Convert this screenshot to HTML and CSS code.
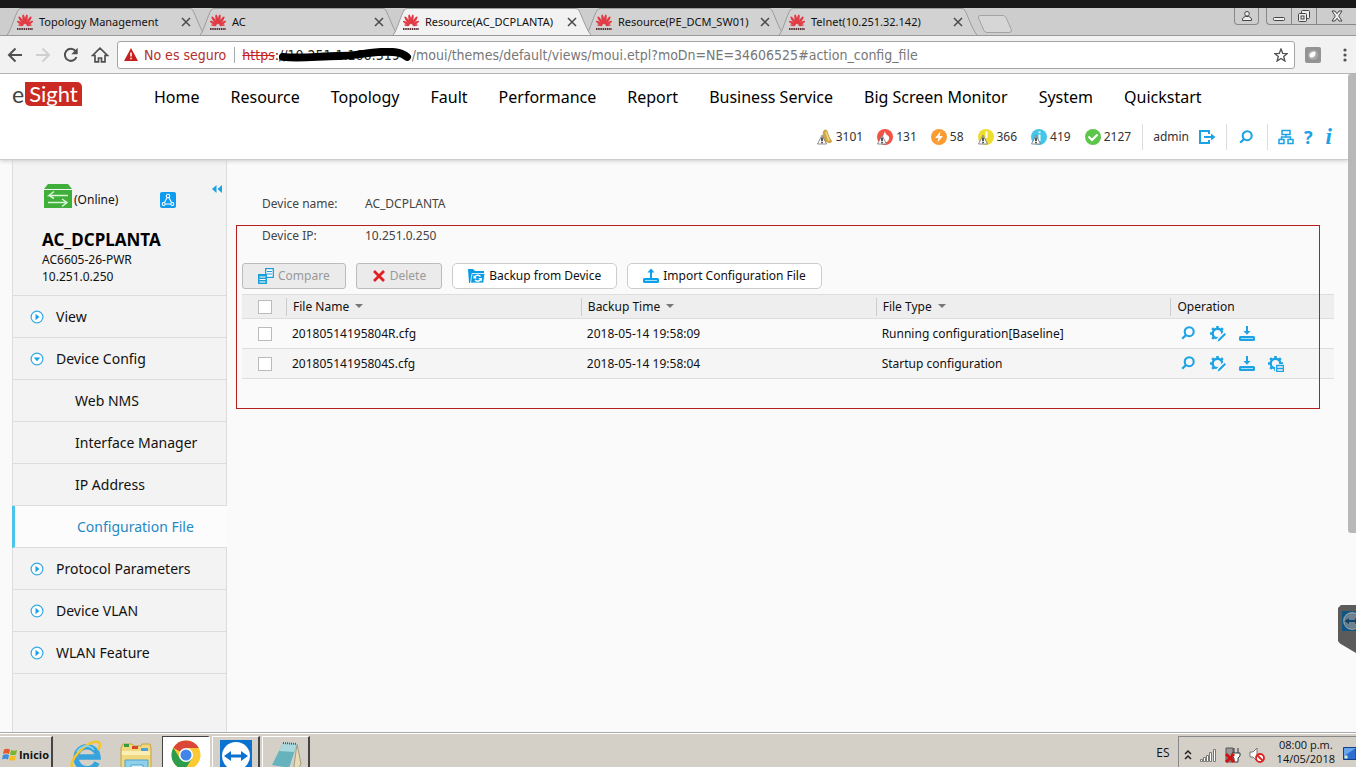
FILE: index.html
```html
<!DOCTYPE html>
<html lang="en">
<head>
<meta charset="utf-8">
<title>Resource(AC_DCPLANTA)</title>
<link rel="stylesheet" href="styles.css">
</head>
<body>
<svg class="defs" aria-hidden="true">
  <symbol id="huawei" viewBox="0 0 16 17">
    <g fill="#e23b45">
      <ellipse cx="6.8" cy="5.2" rx="1.3" ry="4.8" transform="rotate(-9 6.8 5.2)"/>
      <ellipse cx="9.2" cy="5.2" rx="1.3" ry="4.8" transform="rotate(9 9.2 5.2)"/>
      <ellipse cx="4.4" cy="6.6" rx="1.3" ry="4.8" transform="rotate(-34 4.4 6.6)"/>
      <ellipse cx="11.6" cy="6.6" rx="1.3" ry="4.8" transform="rotate(34 11.6 6.6)"/>
      <ellipse cx="3.2" cy="9" rx="1.2" ry="3.8" transform="rotate(-58 3.2 9)"/>
      <ellipse cx="12.8" cy="9" rx="1.2" ry="3.8" transform="rotate(58 12.8 9)"/>
      <ellipse cx="3.8" cy="11.2" rx="2.6" ry=".9" transform="rotate(6 3.8 11.2)"/>
      <ellipse cx="12.2" cy="11.2" rx="2.6" ry=".9" transform="rotate(-6 12.2 11.2)"/>
    </g>
    <path d="M0 15h16" stroke="#5a3035" stroke-width="2" stroke-dasharray="1.5 .7"/>
  </symbol>
  <symbol id="tabshape" viewBox="0 0 206 29">
    <path d="M.5 28C4 25 9 6 12 2.500Q13 .5 15 .5H190Q192 .5 193 2.500C196 8 201 23 205.500 28" stroke="#999"/>
  </symbol>
  <symbol id="close" viewBox="0 0 10 10"><path d="M1 1l8 8M9 1l-8 8" stroke="#4a4a4a" stroke-width="1.500"/></symbol>
  <symbol id="warn" viewBox="0 0 12 12"><path d="M6 .8L11.400 11.400H.6z" fill="#fff" stroke="#777"/><path d="M6 3.500V8M6 9v1.500" stroke="#222" stroke-width="1.800"/></symbol>
  <symbol id="search" viewBox="0 0 14 14"><circle cx="8.200" cy="5.700" r="4.500" fill="none" stroke="#1ca3e6" stroke-width="2.100"/><path d="M5 9L1.200 12.800" stroke="#1ca3e6" stroke-width="2.300"/></symbol>
  <symbol id="gear" viewBox="0 0 16 16">
    <circle cx="7.500" cy="7.500" r="4.800" fill="none" stroke="#1ca3e6" stroke-width="2.400"/>
    <path d="M7.500 0v3M7.500 12v3M2.200 2.200l2 2M0 7.500h3M2.200 12.800l2-2M12.800 2.200l-2 2M12 7.500h3M12.800 12.800l-2-2" stroke="#1ca3e6" stroke-width="2.600"/>
  </symbol>
  <symbol id="gearedit" viewBox="0 0 16 16">
    <use href="#gear"/><path d="M7 16.500L16 7.500" stroke="#fafafa" stroke-width="6"/><path d="M7.500 15.800l1-2.800 6-6 1.500 1.500-6 6z" fill="#1ca3e6"/>
  </symbol>
  <symbol id="gearlist" viewBox="0 0 16 16">
    <use href="#gear"/><path d="M7 8h9v8H7z" fill="#f6f6f6"/><path d="M8.700 9.500h6.700v5.900H8.700zM8.700 12.500h6.700" fill="none" stroke="#1ca3e6" stroke-width="1.300"/>
  </symbol>
  <symbol id="download" viewBox="0 0 16 16"><path d="M8 0v7" stroke="#1ca3e6" stroke-width="2"/><path d="M4.500 5h7L8 8.800z" fill="#1ca3e6"/><rect x="1" y="11" width="14" height="3" rx=".5" fill="#a8dcf4" stroke="#1ca3e6" stroke-width="2"/></symbol>
  <symbol id="upload" viewBox="0 0 16 16"><path d="M8 3v7" stroke="#0aa0ea" stroke-width="2"/><path d="M4.500 4.500h7L8 .5z" fill="#0aa0ea"/><rect x="1" y="11" width="14" height="3" rx=".5" fill="#a8dcf4" stroke="#0aa0ea" stroke-width="2"/></symbol>
  <symbol id="expand" viewBox="0 0 14 14"><circle cx="7" cy="7" r="5.900" fill="#fff" stroke="#35a9e6" stroke-width="1.200"/><path d="M5.500 3.800L9.500 7l-4 3.200z" fill="#1ca3e6"/></symbol>
  <symbol id="collapse" viewBox="0 0 14 14"><circle cx="7" cy="7" r="5.900" fill="#fff" stroke="#35a9e6" stroke-width="1.200"/><path d="M3.700 5.500h6.600L7 9.300z" fill="#1ca3e6"/></symbol>
  <symbol id="teamviewer" viewBox="0 0 32 32"><rect width="32" height="32" fill="#0b72cf"/><circle cx="16" cy="16" r="14" fill="#fff"/><path d="M4 16l7-5v3.500h10V11l7 5-7 5v-3.500H11V21z" fill="#0b72cf"/></symbol>
  <symbol id="teamviewer-dim" viewBox="0 0 32 32"><rect width="32" height="32" fill="#0f5685"/><circle cx="16" cy="16" r="13" fill="none" stroke="#8f9ba3" stroke-width="2.500"/><circle cx="16" cy="16" r="11.500" fill="#6d8190"/><path d="M4 16l7-5v3.500h10V11l7 5-7 5v-3.500H11V21z" fill="#0f4568"/></symbol>
</svg>

<div class="topbar"></div>
<div class="tabstrip">
  <ul class="tabs">
    <li class="tab"><svg class="tab-bg"><use href="#tabshape"/></svg><svg class="tab-logo"><use href="#huawei"/></svg><span class="tab-title">Topology Management</span><button class="tab-close" aria-label="Close tab"><svg><use href="#close"/></svg></button></li>
    <li class="tab"><svg class="tab-bg"><use href="#tabshape"/></svg><svg class="tab-logo"><use href="#huawei"/></svg><span class="tab-title">AC</span><button class="tab-close" aria-label="Close tab"><svg><use href="#close"/></svg></button></li>
    <li class="tab active"><svg class="tab-bg"><use href="#tabshape"/></svg><svg class="tab-logo"><use href="#huawei"/></svg><span class="tab-title">Resource(AC_DCPLANTA)</span><button class="tab-close" aria-label="Close tab"><svg><use href="#close"/></svg></button></li>
    <li class="tab"><svg class="tab-bg"><use href="#tabshape"/></svg><svg class="tab-logo"><use href="#huawei"/></svg><span class="tab-title">Resource(PE_DCM_SW01)</span><button class="tab-close" aria-label="Close tab"><svg><use href="#close"/></svg></button></li>
    <li class="tab"><svg class="tab-bg"><use href="#tabshape"/></svg><svg class="tab-logo"><use href="#huawei"/></svg><span class="tab-title">Telnet(10.251.32.142)</span><button class="tab-close" aria-label="Close tab"><svg><use href="#close"/></svg></button></li>
  </ul>
  <button class="newtab" aria-label="New tab"><svg width="36" height="18" viewBox="0 0 36 18"><path d="M3 .5H26Q28 .5 29 2.500L34.500 15Q35 17.500 32 17.500H10Q8 17.500 7 15.500L1.500 3Q1 .5 3 .5z" fill="#d6d6d6" stroke="#a3a3a3"/></svg></button>
  <div class="winbtns">
    <button class="win user" aria-label="User"><svg width="12" height="12" viewBox="0 0 12 12" fill="#eee" stroke="#444"><circle cx="6" cy="3.800" r="2.300"/><path d="M1.500 10.500V9Q2 7 4.500 6.500h3Q10 7 10.500 9v1.500z"/></svg></button>
    <div class="wingroup">
      <button class="win" aria-label="Minimize"><svg width="12" height="12" viewBox="0 0 12 12"><rect x=".5" y="7.500" width="11" height="3" rx="1" fill="#eee" stroke="#444"/></svg></button>
      <button class="win" aria-label="Restore"><svg width="14" height="14" viewBox="0 0 14 14" fill="#eee" stroke="#444"><rect x="4.500" y="1.500" width="8" height="8" rx="1"/><rect x="1.500" y="4.500" width="8" height="8" rx="1"/><rect x="4" y="7" width="3" height="3"/></svg></button>
      <button class="win last" aria-label="Close"><svg width="12" height="12" viewBox="0 0 12 12"><path d="M1 1h3l2 2.700L8 1h3L7.700 6 11 11H8L6 8.300 4 11H1l3.300-5z" fill="#eee" stroke="#444"/></svg></button>
    </div>
  </div>
</div>

<div class="toolbar">
  <div class="navbtns">
    <button aria-label="Back"><svg width="16" height="16" viewBox="0 0 16 16" fill="none" stroke="#505050" stroke-width="2"><path d="M15 8H2M8.500 1.500L2 8l6.500 6.500"/></svg></button>
    <button aria-label="Forward"><svg width="16" height="16" viewBox="0 0 16 16" fill="none" stroke="#cfcfcf" stroke-width="2"><path d="M1 8h13M7.500 1.500L14 8l-6.500 6.500"/></svg></button>
    <button aria-label="Reload"><svg width="16" height="16" viewBox="0 0 16 16"><path d="M13.500 10A6 6 0 1 1 12.500 4" fill="none" stroke="#505050" stroke-width="2"/><path d="M14.700 .8v6.400H8.300z" fill="#505050"/></svg></button>
    <button aria-label="Home"><svg width="18" height="16" viewBox="0 0 18 16" fill="none" stroke="#505050" stroke-width="1.700"><path d="M1.500 8.500L9 1.200l7.500 7.300H14v6.300h-3.500V11h-3v3.800H4V8.500z"/></svg></button>
  </div>
  <div class="address">
    <svg width="14" height="13" viewBox="0 0 14 13"><path d="M7 0l7 13H0z" fill="#c5221f"/><path d="M7 4.500V8.500M7 9.700v1.600" stroke="#fff" stroke-width="1.500"/></svg>
    <span class="insecure">No es seguro</span>
    <span class="scheme">https</span>
    <span class="host">://10.251.1.166:319<svg class="scribble" viewBox="0 0 140 14"><path d="M8 9C28 11 45 8 65 8S88 5 105 4s24 0 30 5" fill="none" stroke="#000" stroke-width="8" stroke-linecap="round"/></svg></span>
    <input class="url" type="text" aria-label="Address" value="/moui/themes/default/views/moui.etpl?moDn=NE=34606525#action_config_file">
    <button class="star" aria-label="Bookmark"><svg width="14" height="14" viewBox="0 0 14 14"><path d="M7 1l1.700 4.300 4.500.3-3.500 2.900 1.200 4.500L7 10.500 3.100 13l1.200-4.500L.8 5.600l4.500-.3z" fill="none" stroke="#505050" stroke-width="1.300"/></svg></button>
  </div>
  <button class="ext" aria-label="Extension"><svg width="16" height="16" viewBox="0 0 16 16"><rect width="16" height="16" rx="2" fill="#939393"/><circle cx="8" cy="8" r="5" fill="#aaa"/><path d="M4.500 8Q5 4.500 10.500 4.500 11 10 7 10.700q-2.500 0-2.500-2.700z" fill="#fff"/></svg></button>
  <button class="menu" aria-label="Menu"><svg width="4" height="14" viewBox="0 0 4 14" fill="#505050"><circle cx="2" cy="2" r="1.600"/><circle cx="2" cy="7" r="1.600"/><circle cx="2" cy="12" r="1.600"/></svg></button>
</div>

<div class="viewport">
  <header class="header">
    <div class="mainrow">
      <a class="logo" href="#"><span class="logo-e">e</span><span class="logo-s">Sight</span></a>
      <nav class="mainnav">
        <a href="#">Home</a><a href="#">Resource</a><a href="#">Topology</a><a href="#">Fault</a><a href="#">Performance</a><a href="#">Report</a><a href="#">Business Service</a><a href="#">Big Screen Monitor</a><a href="#">System</a><a href="#">Quickstart</a>
      </nav>
    </div>
    <div class="status">
      <div class="alarms">
        <a href="#"><svg width="16" height="16" viewBox="0 0 16 16"><path d="M6 2.500Q8-1 10.500 2L13 9l2 3q0 2-3 2L5 12z" fill="#cfa545"/><path d="M9 3l3 9" stroke="#f0d890" stroke-width="1.500"/><use href="#warn" y="5" width="10" height="11"/></svg>3101</a>
        <a href="#"><svg width="16" height="16" viewBox="0 0 16 16"><circle cx="8" cy="8" r="8" fill="#f25346"/><path d="M8 2q0 3 3.500 5 2 3-1.500 6H6Q3 10 6 7z" fill="#fff"/><use href="#warn" y="5" width="10" height="11"/></svg>131</a>
        <a href="#"><svg width="16" height="16" viewBox="0 0 16 16"><circle cx="8" cy="8" r="8" fill="#fb9c33"/><path d="M9.500 2.500L4 9h3.500l-1 4.500L12 7H8.500z" fill="#fff"/></svg>58</a>
        <a href="#"><svg width="16" height="16" viewBox="0 0 16 16"><circle cx="8" cy="8" r="8" fill="#eedc2e"/><path d="M8.500 2.500V9" stroke="#fff" stroke-width="2"/><use href="#warn" y="5" width="10" height="11"/></svg>366</a>
        <a href="#"><svg width="16" height="16" viewBox="0 0 16 16"><circle cx="8" cy="8" r="8" fill="#42c6ea"/><path d="M8.500 2.500V4M8.500 5.500V12" stroke="#fff" stroke-width="2"/><use href="#warn" y="5" width="10" height="11"/></svg>419</a>
        <a href="#"><svg width="16" height="16" viewBox="0 0 16 16"><circle cx="8" cy="8" r="8" fill="#5bc64a"/><path d="M3.500 7.500L7 11l5.500-5.500" fill="none" stroke="#fff" stroke-width="2.200"/></svg>2127</a>
      </div>
      <div class="tools">admin<button aria-label="Log out"><svg width="17" height="16" viewBox="0 0 17 16" fill="none" stroke="#1ca3e6" stroke-width="2"><path d="M10 5V2H1v12h9v-3M5 8h8"/><path d="M12 4.500L16.500 8 12 11.500z" fill="#1ca3e6" stroke="none"/></svg></button></div>
      <div class="tools find"><button aria-label="Search"><svg width="14" height="14"><use href="#search"/></svg></button></div>
      <div class="tools help">
        <button aria-label="Site map"><svg width="16" height="16" viewBox="0 0 16 16" fill="none" stroke="#1ca3e6" stroke-width="1.500"><path d="M4 1.500h8v4H4zM1 10.500h5v4H1zM10 10.500h5v4h-5zM8 5.500V8M3.500 10.500V8h9v2.500"/></svg></button>
        <button class="glyph" aria-label="Help">?</button>
        <button class="glyph info" aria-label="About">i</button>
      </div>
    </div>
  </header>

  <div class="body">
    <aside class="sidebar">
      <div class="device">
        <div class="device-state">
          <svg width="28" height="24" viewBox="0 0 28 24"><path d="M4 0h20l4 5H0z" fill="#3fae3a"/><path d="M0 6h28v18H0z" fill="#3fae3a"/><path d="M10 7.500L5 11.500h19M5 11.500l5 3M4 18.500h19M18 15l5 3.500-5 4" fill="none" stroke="#d8f5d5" stroke-width="1.500"/></svg>
          <span>(Online)</span>
          <button class="topo" aria-label="Show in topology"><svg width="16" height="16" viewBox="0 0 16 16"><rect width="16" height="16" rx="2" fill="#0f9bf0"/><g fill="none" stroke="#fff" stroke-width="1.100"><circle cx="8" cy="4" r="1.700"/><circle cx="3.700" cy="12" r="1.500"/><circle cx="12.300" cy="12" r="1.500"/><path d="M7.200 5.600L4.400 10.600M8.800 5.600l2.800 5M5.200 12h5.600"/></g></svg></button>
          <button class="fold" aria-label="Collapse sidebar"><svg width="10" height="8" viewBox="0 0 10 8" fill="#1ca3e6"><path d="M4.500 0v8L0 4zM10 0v8L5.500 4z"/></svg></button>
        </div>
        <h1>AC_DCPLANTA</h1>
        <p>AC6605-26-PWR</p>
        <p>10.251.0.250</p>
      </div>
      <nav class="sidenav">
        <a href="#"><svg><use href="#expand"/></svg>View</a>
        <a href="#"><svg><use href="#collapse"/></svg>Device Config</a>
        <a class="sub" href="#">Web NMS</a>
        <a class="sub" href="#">Interface Manager</a>
        <a class="sub" href="#">IP Address</a>
        <a class="sub current" href="#">Configuration File</a>
        <a href="#"><svg><use href="#expand"/></svg>Protocol Parameters</a>
        <a href="#"><svg><use href="#expand"/></svg>Device VLAN</a>
        <a href="#"><svg><use href="#expand"/></svg>WLAN Feature</a>
      </nav>
    </aside>
    <main class="content">
      <dl class="info-list">
        <dt>Device name:</dt><dd>AC_DCPLANTA</dd>
        <dt>Device IP:</dt><dd>10.251.0.250</dd>
      </dl>
      <div class="actions">
        <button class="btn" disabled><svg width="16" height="16" viewBox="0 0 16 16"><path d="M7.700.7h7.600v8.600H7.700z" fill="#fff" stroke="#1c9fd8" stroke-width="1.300"/><path d="M9 3.500h5M9 6h5" stroke="#1c9fd8"/><path d="M0 6h9v10H0z" fill="#1c9fd8"/><path d="M1.500 9h6M1.500 11.500h6M1.500 14h6" stroke="#fff"/></svg>Compare</button>
        <button class="btn" disabled><svg width="14" height="16" viewBox="0 0 14 16"><path d="M2 3l10 10M12 3L2 13" stroke="#e02020" stroke-width="2.800"/></svg>Delete</button>
        <button class="btn"><svg width="17" height="16" viewBox="0 0 17 16"><path d="M0 1h5l2 2h9v12H1z" fill="#0a9be6"/><path d="M2.500 15L4 5.500h13L15.500 15z" fill="#0a9be6" stroke="#fff" stroke-width=".8"/><path d="M6.500 9.500a3.500 3.500 0 0 1 6-1M13 10.500a3.500 3.500 0 0 1-6 1.500" fill="none" stroke="#fff" stroke-width="1.500"/><path d="M5.500 7v3.500H9zM13.800 13.500V10h-3.500z" fill="#fff"/></svg>Backup from Device</button>
        <button class="btn"><svg width="16" height="16"><use href="#upload"/></svg>Import Configuration File</button>
      </div>
      <table class="files">
        <thead>
          <tr><th class="pick"><input type="checkbox" aria-label="Select all"></th><th class="sort"><span>File Name</span></th><th class="sort"><span>Backup Time</span></th><th class="sort"><span>File Type</span></th><th class="ops-col"><span>Operation</span></th></tr>
        </thead>
        <tbody>
          <tr><td class="pick"><input type="checkbox" aria-label="Select 20180514195804R.cfg"></td><td>20180514195804R.cfg</td><td>2018-05-14 19:58:09</td><td>Running configuration[Baseline]</td>
            <td><div class="ops"><button aria-label="View"><svg><use href="#search" width="14" height="14"/></svg></button><button aria-label="Edit"><svg><use href="#gearedit"/></svg></button><button aria-label="Download"><svg><use href="#download"/></svg></button></div></td></tr>
          <tr><td class="pick"><input type="checkbox" aria-label="Select 20180514195804S.cfg"></td><td>20180514195804S.cfg</td><td>2018-05-14 19:58:04</td><td>Startup configuration</td>
            <td><div class="ops"><button aria-label="View"><svg><use href="#search" width="14" height="14"/></svg></button><button aria-label="Edit"><svg><use href="#gearedit"/></svg></button><button aria-label="Download"><svg><use href="#download"/></svg></button><button aria-label="Set baseline"><svg><use href="#gearlist"/></svg></button></div></td></tr>
        </tbody>
      </table>
      <div class="marker"></div>
    </main>
  </div>
  <div class="scroll-thumb"></div>
  <div class="tv-handle"><svg><use href="#teamviewer-dim"/></svg></div>
</div>

<footer class="taskbar">
  <button class="start"><svg width="16" height="16" viewBox="0 0 16 16"><path d="M2 2.500Q5 .8 8 2.500L7 7Q4 5.500 1 7z" fill="#e8582a"/><path d="M9 3q3 1.500 6 0l-1 4.500q-3 1.500-6 0z" fill="#76b82a"/><path d="M1 8q3-1.500 6 0l-1 4.500Q3 11 0 12.500z" fill="#3a8ee0"/><path d="M8 8.500q3 1.500 6 0L13 13q-3 1.500-6 0z" fill="#f7bd1d"/></svg>Inicio</button>
  <div class="apps">
    <button class="app flat" aria-label="Internet Explorer"><svg width="32" height="32" viewBox="0 0 32 32"><path d="M27 22.500A11 11 0 1 1 28 17H9" fill="none" stroke="#36a3dc" stroke-width="5.500"/><path d="M3 28C-4 22 18-1 28 2q4 2 0 8" fill="none" stroke="#f4c530" stroke-width="2.600"/><path d="M7 12A10 10 0 0 1 24 10" fill="none" stroke="#8bd4f4" stroke-width="1.500"/></svg></button>
    <button class="app flat" aria-label="Explorer"><svg width="32" height="32" viewBox="0 0 32 32"><path d="M1 8l2-4h9l2 2h7l1-2h8l1 4v24H1z" fill="#f1d77d" stroke="#c7a33f"/><path d="M4 4h5v3H4z" fill="#3a9b3c"/><path d="M12 6h6v3h-6z" fill="#d6472c"/><path d="M21 8h7v3h-7z" fill="#4d9fe0"/><path d="M2 11h28v4H2z" fill="#faeeb5"/><path d="M5 20h23v12H5z" fill="#8ed0ec" stroke="#4ba5cd"/><path d="M11 25h12v7H11z" fill="#dff3fb" stroke="#4ba5cd"/></svg></button>
    <button class="app pressed" aria-label="Chrome"><svg width="30" height="30" viewBox="0 0 30 30"><circle cx="15" cy="15" r="14.500" fill="#fcc934"/><path d="M15 15L2.400 7.800A14.500 14.500 0 0 1 27.800 8H15z" fill="#dc4636"/><path d="M2.400 7.800A14.500 14.500 0 0 0 14 29.500L21 18.500 15 15 9 18.500z" fill="#2e9d4b"/><circle cx="15" cy="15" r="7" fill="#fff"/><circle cx="15" cy="15" r="5.500" fill="#4285e8"/></svg></button>
    <button class="app" aria-label="TeamViewer"><svg width="32" height="32"><use href="#teamviewer"/></svg></button>
    <button class="app" aria-label="Notepad"><svg width="32" height="32" viewBox="0 0 32 32"><path d="M27 4l4 20-4 6-3-4z" fill="#e8ddb8" stroke="#8b8262" stroke-width=".7"/><path d="M13 3l14 1-8 24-17-3z" fill="#66b3bd"/><path d="M13 3l14 1-3 8-15-1z" fill="#a9d9dd"/><path d="M13 3l14 1" stroke="#556" stroke-width="2" stroke-dasharray="1 1"/></svg></button>
  </div>
  <span class="lang">ES</span>
  <div class="tray">
    <button aria-label="Show hidden icons"><svg width="8" height="12" viewBox="0 0 8 12" fill="none" stroke="#222" stroke-width="1.500"><path d="M1 5l3-3 3 3M1 10l3-3 3 3"/></svg></button>
    <svg width="17" height="14" viewBox="0 0 17 14" fill="#fff" stroke="#777"><path d="M.5 11.500h2v2h-2zM3.500 9.500h2v4h-2zM6.500 7.500h2v6h-2zM9.500 4.500h2v9h-2zM13.500 1.500h2v12h-2z"/></svg>
    <svg width="16" height="16" viewBox="0 0 16 16"><path d="M1 1h7v14H1z" fill="#999" stroke="#555"/><path d="M7 6h8v3l-2 2v4h-4v-4L7 9z" fill="#fff" stroke="#333"/><path d="M9 1v5M13 1v5" stroke="#333"/><path d="M1 7l8 8M9 7l-8 8" stroke="#d41111" stroke-width="3"/></svg>
    <svg width="16" height="16" viewBox="0 0 16 16"><path d="M1 5h3l4-4v13l-4-4H1z" fill="#fff" stroke="#777"/><circle cx="11" cy="11" r="4" fill="#fff" stroke="#dd2222" stroke-width="1.800"/><path d="M8 8l6 6" stroke="#dd2222" stroke-width="1.800"/></svg>
    <div class="clock"><span>08:00 p.m.</span><span>14/05/2018</span></div>
    <svg class="desk" width="13" height="13" viewBox="0 0 13 13"><path d="M.5.500H13v12H.5z" fill="#2c6fd0" stroke="#123f8a"/><path d="M1 1h12L1 9z" fill="#69a6ee"/><circle cx="3" cy="10" r="1.800" fill="#d9e8c0"/></svg>
  </div>
</footer>
</body>
</html>
```

FILE: styles.css
```css
* { box-sizing: border-box; }
body {
  margin: 0;
  height: 100vh;
  display: flex;
  flex-direction: column;
  overflow: hidden;
  font: 12px/18px "Noto Sans", sans-serif;
  color: #111;
  background: #fafafa;
}
button { border: 0; padding: 0; margin: 0; background: none; font: inherit; color: inherit; display: flex; align-items: center; justify-content: center; }
a { color: inherit; text-decoration: none; }
svg { flex: none; display: block; }
h1, p, dl, dd, ul { margin: 0; padding: 0; }
.defs { position: absolute; width: 0; height: 0; }

/* Browser frame */
.topbar { flex: none; height: 8px; background: #191919; }
.tabstrip { flex: none; height: 28px; display: flex; background: #cdcdcd; border-bottom: 1px solid #999; }
.tabs { display: flex; list-style: none; padding-left: 3px; }
.tab { position: relative; isolation: isolate; width: 193px; height: 28px; display: flex; align-items: center; padding: 0 5px 0 14px; font: 11px/16px "Noto Sans", sans-serif; }
.tab-bg { position: absolute; z-index: -1; left: 0; top: 0; width: 206px; height: 28px; fill: #d2d2d2; }
.tab.active { z-index: 1; }
.tab.active .tab-bg { fill: #f2f2f2; }
.tab-logo { width: 16px; height: 17px; margin-right: 6px; }
.tab-title { flex: 1; white-space: nowrap; }
.tab-close { width: 10px; height: 10px; }
.tab-close svg { width: 10px; height: 10px; }
.newtab { margin: 7px 0 0 9px; height: 18px; }
.winbtns { margin-left: auto; display: flex; gap: 7px; height: 17px; }
.wingroup { display: flex; border: 1px solid #888; border-top: 0; border-right: 0; border-radius: 0 0 0 4px; }
.win { width: 25px; height: 16px; border-right: 1px solid #888; }
.win.user { height: 17px; border: 1px solid #888; border-top: 0; border-radius: 0 0 4px 4px; }
.win.last { width: 39px; border-right: 0; }
.toolbar { flex: none; height: 38px; display: flex; align-items: center; background: #f2f2f2; border-bottom: 1px solid #b4b4b4; padding: 0 9px 0 7px; }
.navbtns { display: flex; gap: 12px; width: 110px; flex: none; }
.address { flex: 1; min-width: 0; height: 28px; display: flex; align-items: center; background: #fff; border: 1px solid #a5a5a5; border-radius: 3px; padding: 0 6px; font: 14px/20px "DejaVu Sans Condensed", "DejaVu Sans", sans-serif; white-space: nowrap; }
.insecure { color: #b3302c; margin-left: 6px; padding-right: 8px; border-right: 1px solid #aaa; line-height: 16px; }
.scheme { color: #c5221f; text-decoration: line-through; margin-left: 7px; }
.host { position: relative; min-width: 137px; color: #222; }
.scribble { position: absolute; left: 0; top: 3px; width: 137px; height: 14px; }
.url { flex: 1; min-width: 0; border: 0; padding: 0; outline: 0; background: none; font: inherit; color: #777; }
.ext { margin: 0 22px 0 10px; }

/* Page */
.viewport { position: relative; flex: 1; min-height: 0; display: flex; flex-direction: column; overflow: hidden; padding-right: 8px; }
.header { flex: none; height: 86px; background: #fff; border-bottom: 1px solid #ccc; box-shadow: 0 1px 4px #ccc; z-index: 1; }
.mainrow { display: flex; height: 46px; padding-left: 12px; }
.logo { width: 142px; display: flex; padding-top: 8px; }
.logo-e { font: 23px/24px Lato, sans-serif; color: #444; margin-right: 1px; }
.logo-s { height: 24px; padding: 0 4px; background: #cb2a22; color: #fff; border-radius: 0 5px 0 5px; font: 22px/23px Lato, sans-serif; }
.mainnav { display: flex; gap: 31px; font-size: 16px; line-height: 46px; white-space: nowrap; color: #000; }
.status { display: flex; justify-content: flex-end; align-items: center; height: 34px; padding-right: 16px; color: #333; }
.alarms { display: flex; gap: 14px; padding-right: 11px; }
.alarms a { display: flex; align-items: center; gap: 3px; }
.tools { display: flex; align-items: center; gap: 10px; height: 26px; padding: 0 10px; border-left: 1px solid #ddd; }
.tools.find { padding: 0 14px 0 12px; }
.tools.help { padding-right: 0; }
.glyph { font: bold 18px/20px "Noto Sans", sans-serif; color: #1ca3e6; }
.glyph.info { padding-left: 3px; font: italic bold 23px/20px "Liberation Serif", serif; }
.body { flex: 1; min-height: 0; display: flex; padding-left: 12px; background: #fafafa; }
.sidebar { width: 215px; flex: none; background: #f3f3f3; border: solid #ddd; border-width: 0 1px; }
.device { height: 136px; padding: 23px 4px 0 29px; border-bottom: 1px solid #ddd; }
.device-state { display: flex; align-items: center; height: 28px; }
.device-state > svg { margin: 0 0 2px 2px; }
.device-state span { margin: 6px 0 0 2px; flex: 1; }
.device-state .topo { margin: 6px 36px 0 0; }
.fold { align-self: flex-start; margin-top: 2px; }
.device h1 { font-size: 17px; line-height: 22px; margin-top: 18px; color: #000; }
.device p { line-height: 17px; }
.sidenav { font-size: 14px; color: #111; }
.sidenav a { display: flex; align-items: center; height: 42px; padding-left: 17px; border-bottom: 1px solid #ddd; }
.sidenav svg { width: 14px; height: 14px; margin-right: 12px; }
.sidenav .sub { padding-left: 62px; }
.sidenav .current { margin: 0 -1px; border-left: 3px solid #4bc3ea; background: #fcfcfc; color: #2489c5; }
.content { position: relative; flex: 1; min-width: 0; padding: 35px 14px 0 15px; }
.info-list { display: grid; grid-template-columns: 103px 1fr; row-gap: 14px; padding-left: 20px; color: #444; }
.actions { display: flex; gap: 10px; margin-top: 18px; }
.btn { height: 26px; gap: 4px; padding: 0 15px; border: 1px solid #ccc; border-radius: 5px; background: #fff; white-space: nowrap; color: #111; }
.btn:disabled { background: #ebebeb; border-color: #bbb; border-radius: 3px; color: #999; }
.files { width: 100%; margin-top: 5px; border-collapse: collapse; table-layout: fixed; border-top: 1px solid #ddd; }
.files th { height: 24px; padding: 0; text-align: left; font-weight: normal; background: #eee; }
.files th span { display: block; border-left: 1px solid #ccc; padding-left: 6px; }
.files .sort { width: 27%; }
.files .sort span::after { content: ""; display: inline-block; margin-left: 6px; vertical-align: 3px; border: 4px solid transparent; border-top-color: #777; border-bottom: 0; }
.files td { height: 30px; padding: 0 0 0 6px; }
.files tr { border-bottom: 1px solid #ddd; }
.files tbody tr:nth-child(2) { background: #f5f5f5; }
.files .pick { width: 44px; padding: 0 0 0 16px; }
.files input { appearance: none; display: block; margin: 0; width: 14px; height: 14px; border: 1px solid #bbb; background: #fff; }
.ops { display: flex; gap: 13px; padding-left: 5px; }
.ops svg { width: 16px; height: 16px; }
.marker { position: absolute; left: 9px; right: 28px; top: 65px; height: 184px; border: 1px solid #b81d1d; pointer-events: none; }
.scroll-thumb { position: absolute; z-index: 2; right: 0; top: 0; width: 8px; height: 459px; background: #b8b8b8; border-radius: 3px 0 0 3px; }
.tv-handle { position: absolute; right: 0; top: 531px; width: 18px; height: 48px; padding: 6px 0 0 4px; overflow: hidden; background: #5b5b5b; clip-path: polygon(0 3px, 3px 0, 100% 0, 100% 100%, 2px 80%, 0 75%); }
.tv-handle svg { width: 20px; height: 20px; }

/* Taskbar */
.taskbar { flex: none; height: 35px; display: flex; align-items: flex-start; overflow: hidden; background: #d4d0c8; border-top: 1px solid #aaa; box-shadow: inset 0 1px #fff; font: 11px/14px "Open Sans", sans-serif; color: #111; }
.start { width: 53px; height: 40px; margin-top: 3px; border-right: 2px solid #444; border-top: 1px solid #fff; font: bold 11px/16px "Open Sans", sans-serif; gap: 1px; align-items: flex-start; padding-top: 10px; }
.apps { display: flex; gap: 2px; padding: 3px 0 0 9px; flex: 1; }
.app { width: 48px; height: 44px; padding-top: 3px; align-items: flex-start; border: solid; border-width: 1px 2px 1px 1px; border-color: #fff #444 #444 #fff; }
.app.flat { border-color: transparent; }
.app.pressed { background: #fff; border-color: #444 #fff #fff #444; }
.lang { font-size: 12px; padding: 13px 8px 0 0; }
.tray { display: flex; gap: 8px; height: 40px; margin-top: 3px; padding-left: 5px; border-top: 1px solid #888; border-left: 1px solid #888; }
.tray > svg, .tray > button { margin-top: 10px; height: 16px; }
.clock { display: flex; flex-direction: column; align-items: center; padding: 1px 0 0 4px; }
.tray .desk { margin: 10px 0 0; height: 13px; }
```
